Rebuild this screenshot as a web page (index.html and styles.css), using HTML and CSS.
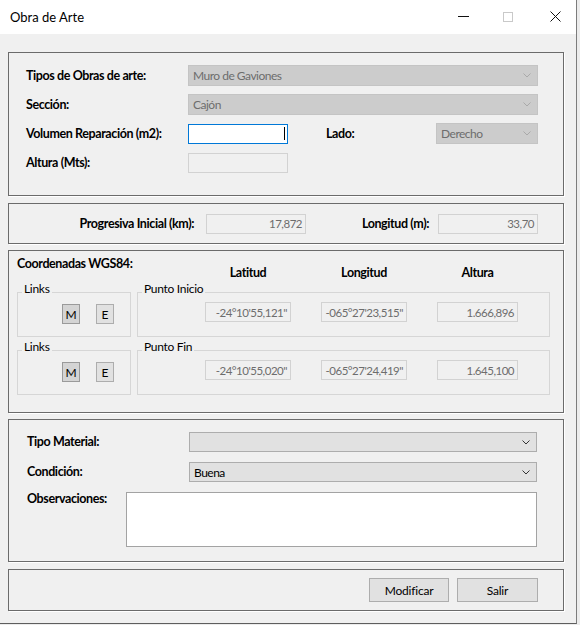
FILE: index.html
```
<!DOCTYPE html>
<html lang="es">
<head>
    <meta charset="UTF-8">
    <meta name="viewport" content="width=device-width, initial-scale=1.0">
    <title>Obra de Arte</title>
    <link rel="stylesheet" href="styles.css">
</head>
<body>
    <div class="window">
        <div class="titlebar">
            <span class="title">Obra de Arte</span>
            <div class="win-btns">
                <svg class="wb-min" width="11" height="11" viewBox="0 0 11 11"><path d="M0 5.5 H11" stroke="#111" stroke-width="1"/></svg>
                <svg class="wb-max" width="10" height="10" viewBox="0 0 10 10"><rect x="0.5" y="0.5" width="9" height="9" fill="none" stroke="#c9c9c9" stroke-width="1"/></svg>
                <svg class="wb-close" width="11" height="11" viewBox="0 0 11 11"><path d="M0.5 0.5 L10.5 10.5 M10.5 0.5 L0.5 10.5" stroke="#111" stroke-width="1"/></svg>
            </div>
        </div>

        <div class="content">
            <!-- datos generales -->
            <div class="panel p1">
                <div class="row">
                    <label class="lbl w162">Tipos de Obras de arte:</label>
                    <div class="combo off w350"><span>Muro de Gaviones</span><svg width="8" height="5" viewBox="0 0 8 5"><path d="M0.5 0.5 L4 4 L7.5 0.5" fill="none" stroke="#a9a9a9"/></svg></div>
                </div>
                <div class="row">
                    <label class="lbl w162">Sección:</label>
                    <div class="combo off w350"><span>Cajón</span><svg width="8" height="5" viewBox="0 0 8 5"><path d="M0.5 0.5 L4 4 L7.5 0.5" fill="none" stroke="#a9a9a9"/></svg></div>
                </div>
                <div class="row">
                    <label class="lbl w162">Volumen Reparación (m2):</label>
                    <div class="field focus w100"><span class="caret"></span></div>
                    <label class="lbl lado">Lado:</label>
                    <div class="combo off w102"><span>Derecho</span><svg width="8" height="5" viewBox="0 0 8 5"><path d="M0.5 0.5 L4 4 L7.5 0.5" fill="none" stroke="#a9a9a9"/></svg></div>
                </div>
                <div class="row">
                    <label class="lbl w162">Altura (Mts):</label>
                    <div class="field w100"></div>
                </div>
            </div>

            <!-- progresiva -->
            <div class="panel p2">
                <label class="lbl prog">Progresiva Inicial (km):</label>
                <div class="field num w100">17,872</div>
                <label class="lbl long">Longitud (m):</label>
                <div class="field num w100">33,70</div>
            </div>

            <!-- coordenadas -->
            <div class="panel p3">
                <div class="coord-head">
                    <span class="lbl coord-title">Coordenadas WGS84:</span>
                    <span class="lbl col c86">Latitud</span>
                    <span class="lbl col c86">Longitud</span>
                    <span class="lbl col c81">Altura</span>
                </div>
                <div class="coord-row">
                    <fieldset class="links">
                        <legend>Links</legend>
                        <div class="links-in">
                            <button class="sq pressed">M</button>
                            <button class="sq">E</button>
                        </div>
                    </fieldset>
                    <fieldset class="punto">
                        <legend>Punto Inicio</legend>
                        <div class="punto-in">
                            <div class="field num c86">-24°10'55,121"</div>
                            <div class="field num c86">-065°27'23,515"</div>
                            <div class="field num c81">1.666,896</div>
                        </div>
                    </fieldset>
                </div>
                <div class="coord-row second">
                    <fieldset class="links">
                        <legend>Links</legend>
                        <div class="links-in">
                            <button class="sq pressed">M</button>
                            <button class="sq">E</button>
                        </div>
                    </fieldset>
                    <fieldset class="punto">
                        <legend>Punto Fin</legend>
                        <div class="punto-in">
                            <div class="field num c86">-24°10'55,020"</div>
                            <div class="field num c86">-065°27'24,419"</div>
                            <div class="field num c81">1.645,100</div>
                        </div>
                    </fieldset>
                </div>
            </div>

            <!-- material -->
            <div class="panel p4">
                <div class="row r4">
                    <label class="lbl w162">Tipo Material:</label>
                    <div class="combo w348"><span></span><svg width="8" height="5" viewBox="0 0 8 5"><path d="M0.5 0.5 L4 4 L7.5 0.5" fill="none" stroke="#333"/></svg></div>
                </div>
                <div class="row r4">
                    <label class="lbl w162">Condición:</label>
                    <div class="combo w348"><span>Buena</span><svg width="8" height="5" viewBox="0 0 8 5"><path d="M0.5 0.5 L4 4 L7.5 0.5" fill="none" stroke="#333"/></svg></div>
                </div>
                <div class="row obs">
                    <label class="lbl w99">Observaciones:</label>
                    <textarea class="memo"></textarea>
                </div>
            </div>

            <!-- botones -->
            <div class="panel p5">
                <button class="btn">Modificar</button>
                <button class="btn">Salir</button>
            </div>
        </div>
    </div>
</body>
</html>
```
FILE: styles.css
```
* {
    box-sizing: border-box;
}
body {
    margin: 0;
    padding: 0;
    background-color: #ececec;
    font-family: Lato, "Liberation Sans", Arial, sans-serif;
    font-size: 12px;
    color: #000;
}
.window {
    width: 577px;
    height: 624px;
    background-color: #f0f0f0;
    border-right: 1px solid #7c7c7c;
    border-bottom: 1px solid #5e5e5e;
}
.titlebar {
    height: 34px;
    background-color: #fff;
    display: flex;
    align-items: center;
    padding-left: 10px;
}
.title {
    font-size: 13px;
}
.win-btns {
    margin-left: auto;
    display: flex;
    align-items: center;
    padding-right: 15px;
    margin-top: -1px;
}
.wb-max {
    margin-left: 34px;
}
.wb-close {
    margin-left: 37px;
}
.content {
    padding: 18px 12px 0 8px;
}
.panel {
    border: 1px solid #6b6b6b;
    box-shadow: 1px 1px 0 #fff;
}
.p1 {
    height: 144px;
    padding: 12px 0 0 17px;
}
.p2 {
    height: 41px;
    margin-top: 7px;
    display: flex;
    align-items: center;
    padding: 0 25px 0 0;
}
.p3 {
    height: 163px;
    margin-top: 6px;
    padding: 6px 0 0 8px;
}
.p4 {
    height: 143px;
    margin-top: 6px;
    padding: 12px 0 0 18px;
}
.p5 {
    height: 42px;
    margin-top: 7px;
    display: flex;
    justify-content: flex-end;
    align-items: center;
    gap: 8px;
    padding-right: 25px;
}

.lbl {
    font-size: 12.5px;
    font-weight: bold;
    letter-spacing: -0.4px;
    line-height: 14px;
}
.row {
    display: flex;
    align-items: center;
    height: 21px;
    margin-bottom: 8px;
}
.row.r4 {
    height: 20px;
    margin-bottom: 10px;
}
.row.obs {
    height: 55px;
    align-items: flex-start;
    margin-top: 1px;
}
.w162 { width: 162px; }
.w99 { width: 99px; }
.w100 { width: 100px; }
.w102 { width: 102px; }
.w348 { width: 348px; }
.w350 { width: 350px; }
.lado {
    margin-left: 38px;
    width: 110px;
}

.combo {
    height: 21px;
    display: flex;
    align-items: center;
    justify-content: space-between;
    padding: 0 6px 0 4px;
    background-color: #e1e1e1;
    border: 1px solid #adadad;
    letter-spacing: -0.5px;
}
.r4 .combo {
    height: 20px;
}
.combo.off {
    background-color: #cccccc;
    border-color: #c4c4c4;
    color: #6d6d6d;
}
.field {
    height: 20px;
    border: 1px solid #d2d2d2;
    background-color: #f0f0f0;
    color: #6d6d6d;
    font-size: 11.5px;
    letter-spacing: -0.5px;
    display: flex;
    align-items: center;
}
.field.num {
    justify-content: flex-end;
    padding-right: 3px;
}
.field.focus {
    background-color: #fff;
    border-color: #0078d7;
    justify-content: flex-end;
    padding-right: 2px;
}
.caret {
    width: 1px;
    height: 13px;
    background-color: #000;
}

.prog {
    flex: 1;
    text-align: right;
    margin-right: 12px;
}
.long {
    width: 123px;
    text-align: right;
    margin-right: 9px;
}

.coord-head {
    display: flex;
    align-items: flex-start;
}
.coord-title {
    width: 188px;
}
.col {
    text-align: center;
    margin-top: 9px;
    margin-right: 30px;
}
.c86 { width: 86px; }
.c81 { width: 81px; }
.coord-row {
    display: flex;
    gap: 6px;
    margin-top: 2px;
}
.coord-row.second {
    margin-top: 3px;
}
fieldset {
    margin: 0;
    padding: 0;
    border: 1px solid #d6d6d6;
    height: 55px;
}
legend {
    margin-left: 4px;
    padding: 0 2px 6px 2px;
    line-height: 14px;
    letter-spacing: -0.3px;
}
.links {
    width: 114px;
}
.links-in {
    padding: 2px 0 0 44px;
    display: flex;
    gap: 16px;
}
.punto {
    width: 413px;
}
.punto-in {
    padding-left: 67px;
    display: flex;
    gap: 30px;
}
.sq {
    width: 18px;
    height: 20px;
    padding: 0;
    font-family: inherit;
    font-size: 12px;
    background-color: #e1e1e1;
    border: 1px solid #adadad;
    color: #000;
}
.sq.pressed {
    background-color: #d4d4d4;
    border-color: #9a9a9a;
}

.memo {
    width: 411px;
    height: 55px;
    border: 1px solid #a3a3a3;
    background-color: #fff;
    resize: none;
    margin: 0;
}
.btn {
    height: 24px;
    width: 80px;
    font-family: inherit;
    font-size: 12px;
    letter-spacing: -0.2px;
    background-color: #e1e1e1;
    border: 1px solid #adadad;
    color: #000;
    padding: 0;
}
.btn + .btn {
    width: 81px;
}
```
